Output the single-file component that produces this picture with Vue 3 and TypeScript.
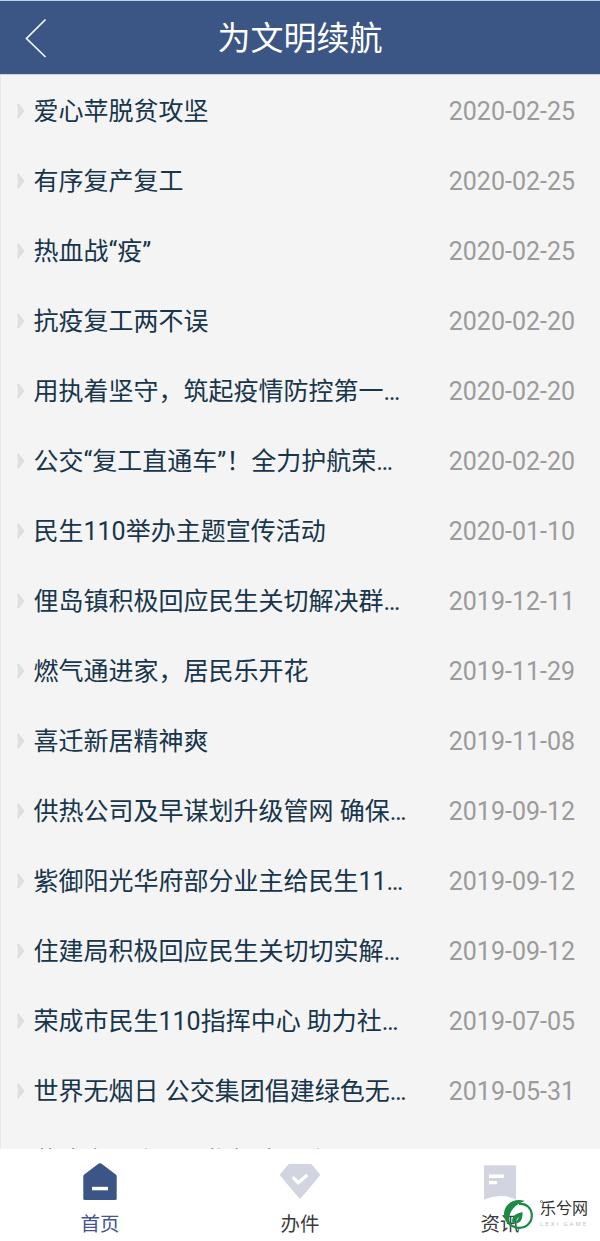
<script setup lang="ts">
interface Article {
  title: string
  date: string
}

const articles: Article[] = [
  { title: '爱心苹脱贫攻坚', date: '2020-02-25' },
  { title: '有序复产复工', date: '2020-02-25' },
  { title: '热血战“疫”', date: '2020-02-25' },
  { title: '抗疫复工两不误', date: '2020-02-20' },
  { title: '用执着坚守，筑起疫情防控第一…', date: '2020-02-20' },
  { title: '公交“复工直通车”！全力护航荣…', date: '2020-02-20' },
  { title: '民生110举办主题宣传活动', date: '2020-01-10' },
  { title: '俚岛镇积极回应民生关切解决群…', date: '2019-12-11' },
  { title: '燃气通进家，居民乐开花', date: '2019-11-29' },
  { title: '喜迁新居精神爽', date: '2019-11-08' },
  { title: '供热公司及早谋划升级管网 确保…', date: '2019-09-12' },
  { title: '紫御阳光华府部分业主给民生11…', date: '2019-09-12' },
  { title: '住建局积极回应民生关切切实解…', date: '2019-09-12' },
  { title: '荣成市民生110指挥中心 助力社…', date: '2019-07-05' },
  { title: '世界无烟日 公交集团倡建绿色无…', date: '2019-05-31' },
  { title: '荣成市民生110 指挥中心为民服…', date: '' },
]
</script>

<template>
  <div class="screen">
    <header class="header">
      <svg class="back" viewBox="0 0 24 42" width="24" height="42">
        <path d="M21.5 2.5 2.5 21.5 21.5 40" />
      </svg>
      <h1>为文明续航</h1>
    </header>

    <main class="list">
      <div v-for="(item, i) in articles" :key="i" class="row">
        <svg class="arrow" viewBox="0 0 9 16" width="9" height="16">
          <path d="M1 .8H3L8.6 8 3 15.2H1L2 8Z" />
        </svg>
        <span class="title">{{ item.title }}</span>
        <time class="date">{{ item.date }}</time>
      </div>
    </main>

    <nav class="tabs">
      <a class="tab active">
        <svg viewBox="0 0 40 40" width="40" height="40">
          <path class="navy" d="M18.8 1.6Q20 .7 21.2 1.6L35.8 12.6Q36.7 13.4 36.7 14.6V36.5Q36.7 38 35.2 38H4.8Q3.3 38 3.3 36.5V14.6Q3.3 13.4 4.2 12.6Z" />
          <path class="cut" d="M12 24.8H28V28.3H12Z" />
        </svg>
        <span>首页</span>
      </a>
      <a class="tab">
        <svg viewBox="0 0 40 40" width="40" height="40">
          <path class="pale" d="M9.5 2H30.5Q31.4 2 32 2.7L39.6 12Q40.4 13 39.6 14L21 36Q20 37.1 19 36L.4 14Q-.4 13 .4 12L8 2.7Q8.6 2 9.5 2Z" />
          <path class="tick" d="M12.8 15.2 18.3 20.8 27.2 13" />
        </svg>
        <span>办件</span>
      </a>
      <a class="tab">
        <svg viewBox="0 0 40 40" width="40" height="40">
          <path class="pale" d="M5 3.2H35Q36 3.2 36 4.2V37.5Q20 30.5 4 37.5V4.2Q4 3.2 5 3.2Z" />
          <path class="cut" d="M9 12.5H24V16H9ZM9 19H17V22.3H9Z" />
        </svg>
        <span>资讯</span>
      </a>
    </nav>

    <div class="watermark">
      <svg viewBox="0 0 32 32" width="32" height="32">
        <path class="green" d="M23 2C12-1.6 2 5 2 15.5C2 20.5 4.5 24.5 9 27.5C4 17 10 6 23 2Z" />
        <path class="ring" d="M17 5C24.5 4 29.8 9.5 29.8 16.5C29.8 23.5 24.5 28.8 17.5 28.8C12.5 28.8 8.5 26.5 6 22.5" />
        <path class="green" d="M20.5 13C13 14.5 9.5 17.5 10.3 23.5L12.2 25.5C12.5 22.5 14.5 20.5 17.5 17.5C15.6 20.5 14.2 22.5 14 24.5C19.5 23.8 20.7 19 20.5 13Z" />
      </svg>
      <div class="brand">
        <i class="dot"></i>
        <span class="name">乐兮网</span>
        <span class="latin">LEXI GAME</span>
      </div>
    </div>
  </div>
</template>

<style>
body {
  margin: 0;
  overflow: hidden;
}
</style>

<style scoped>
.screen {
  position: relative;
  display: flex;
  flex-direction: column;
  box-sizing: border-box;
  width: 600px;
  height: 1241px;
  overflow: hidden;
  background: #f4f4f4;
  font-family: Roboto, "Noto Sans CJK SC", sans-serif;
}

.header {
  display: flex;
  align-items: center;
  flex: none;
  box-sizing: border-box;
  height: 75px;
  padding: 0 24px;
  border-top: 1px solid #b9d3ea;
  border-bottom: 1px solid #c5d5ea;
  background: #3b5684;
}

.back {
  flex: none;
}

.back path {
  fill: none;
  stroke: #f3f8ff;
  stroke-width: 1.7;
}

h1 {
  flex: 1;
  margin: 2px 24px 0 0;
  color: #fff;
  font-size: 33px;
  font-weight: 400;
  line-height: 48px;
  text-align: center;
}

.list {
  flex: 1;
  min-height: 0;
  padding-top: 1px;
  overflow: hidden;
  border-left: 1px solid #e7e8ea;
}

.row {
  display: flex;
  align-items: center;
  box-sizing: border-box;
  height: 70px;
  padding: 0 25px 0 15px;
}

.title {
  flex: 1;
  margin-left: 8.5px;
  padding-top: 1px;
  color: #17354b;
  font-size: 25px;
  line-height: 36px;
  white-space: nowrap;
}

.arrow {
  flex: none;
  fill: #dfdfe0;
}

.date {
  padding-top: 2px;
  color: #9b9b9b;
  font-size: 25px;
  line-height: 36px;
}

.tabs {
  display: flex;
  flex: none;
  height: 92px;
  background: #fff;
}

.tab {
  display: flex;
  flex: 1;
  flex-direction: column;
  align-items: center;
  box-sizing: border-box;
  padding-top: 13px;
  color: #3c3c3c;
  font-size: 19.5px;
  line-height: 28px;
}

.tab span {
  margin-top: 9px;
}

.active {
  color: #435595;
}

.navy {
  fill: #3b5586;
}

.pale {
  fill: #d2d5e0;
}

.cut {
  fill: #fff;
}

.tick {
  fill: none;
  stroke: #fff;
  stroke-width: 3.3;
}

.watermark {
  position: absolute;
  top: 1199px;
  left: 502px;
  display: flex;
}

.green {
  fill: #198b43;
}

.ring {
  fill: none;
  stroke: #198b43;
  stroke-width: 2.2;
}

.brand {
  position: relative;
  display: flex;
  flex-direction: column;
  margin-left: 6px;
}

.dot {
  position: absolute;
  top: 1px;
  left: 0;
  width: 1px;
  height: 1px;
  border: 1px solid #777;
  border-radius: 50%;
}

.name {
  color: #333;
  font-size: 16px;
  line-height: 20px;
}

.latin {
  margin-top: 1px;
  color: #c4c4c4;
  font-size: 6px;
  letter-spacing: 2px;
  line-height: 8px;
  white-space: nowrap;
}
</style>
